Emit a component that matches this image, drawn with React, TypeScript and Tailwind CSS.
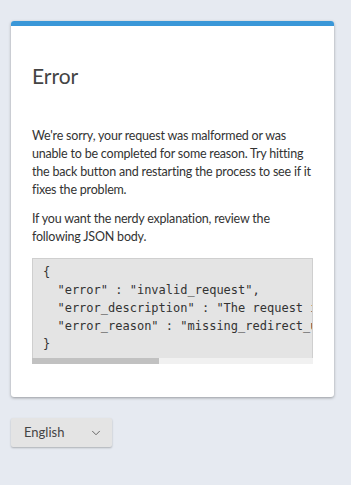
import { ChevronDown } from 'lucide-react';

const json = [
  '{',
  '  "error" : "invalid_request",',
  '  "error_description" : "The request is missing a required parameter",',
  '  "error_reason" : "missing_redirect_uri"',
  '}',
];

export default function App() {
  return (
    <div
      className="min-h-[485px] bg-[#e6eaf1] px-[11px] pt-[21px] pb-8 text-[#333]"
      style={{ fontFamily: 'Lato, "Open Sans", sans-serif' }}
    >
      {/* Card */}
      <div className="w-[323px] overflow-hidden rounded-[3px] bg-white shadow-[0_1px_3px_rgba(0,0,0,0.35)]">
        <div className="h-[5px] bg-[#3a97d8]" />
        <div className="px-[21px] pt-[37px] pb-[33px]">
          <h1 className="text-[21px] leading-[26px] text-[#444]">Error</h1>

          <p className="mt-[38px] text-[12.5px] leading-[18px] tracking-[-0.2px]">
            We're sorry, your request was malformed or was unable to be completed for some reason. Try
            hitting the back button and restarting the process to see if it fixes the problem.
          </p>
          <p className="mt-[11px] text-[12.5px] leading-[18px] tracking-[-0.2px]">
            If you want the nerdy explanation, review the following JSON body.
          </p>

          <div className="mt-[12px] border border-b-0 border-[#cfcfcf] bg-[#e4e4e4]">
            <div className="overflow-hidden">
              <pre
                className="w-[600px] px-[10px] pt-[4px] pb-[5px] text-[12px] leading-[18px] text-[#333]"
                style={{ fontFamily: '"DejaVu Sans Mono", monospace' }}
              >
                {json.join('\n')}
              </pre>
            </div>
            <div className="-mx-px h-[6px] bg-[#f1f1f1]">
              <div className="h-full w-[127px] bg-[#c1c1c1]" />
            </div>
          </div>
        </div>
      </div>

      {/* Language select */}
      <button className="mt-[21px] flex h-[29px] w-[101px] items-center justify-between rounded-[2px] bg-[#e4e4e4] pl-[13px] pr-[9px] text-[13px] text-[#444] shadow-[0_1px_2px_rgba(0,0,0,0.25)]">
        <span>English</span>
        <ChevronDown className="h-[14px] w-[14px] text-[#555]" strokeWidth={1.5} />
      </button>
    </div>
  );
}
